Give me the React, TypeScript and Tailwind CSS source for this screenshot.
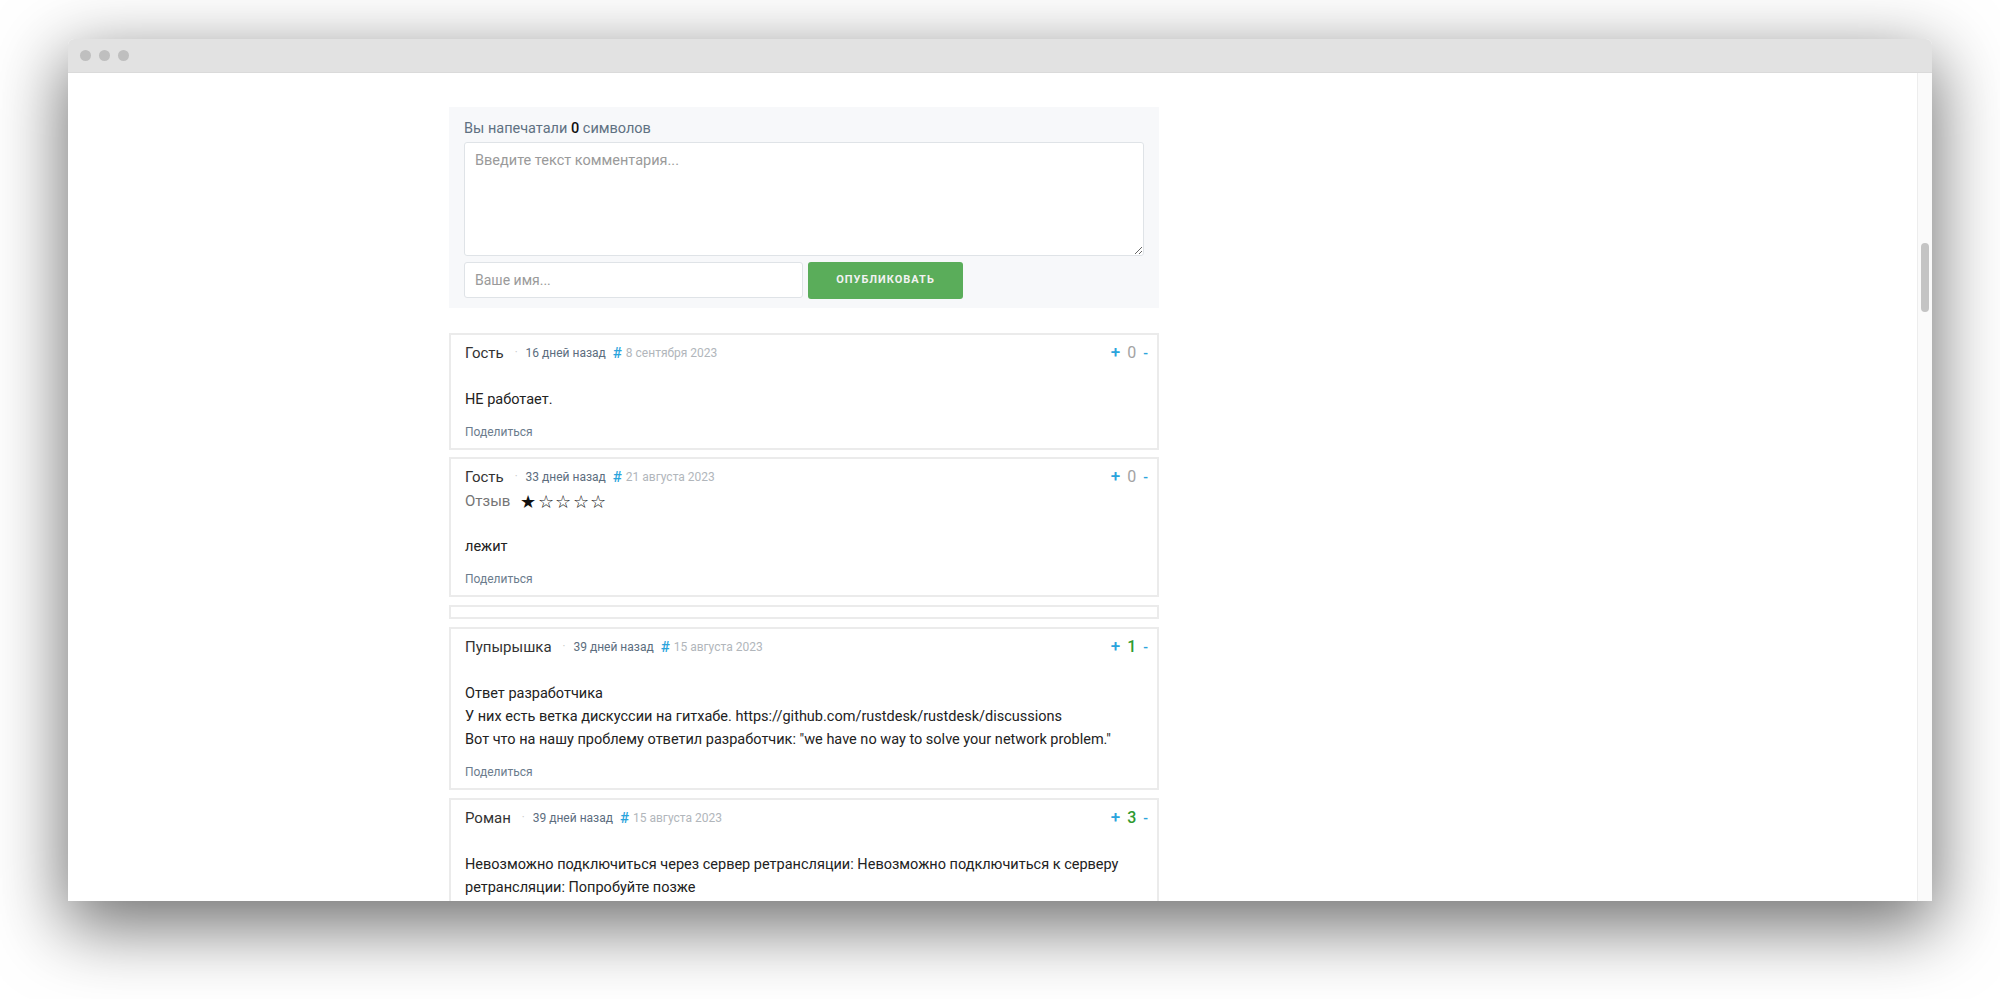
import React from 'react';

interface CommentData {
    author: string;
    ago: string;
    date: string;
    votes: number;
    rating?: number;
    lines: string[];
}

const comments: CommentData[] = [
    {
        author: 'Гость',
        ago: '16 дней назад',
        date: '8 сентября 2023',
        votes: 0,
        lines: ['НЕ работает.'],
    },
    {
        author: 'Гость',
        ago: '33 дней назад',
        date: '21 августа 2023',
        votes: 0,
        rating: 1,
        lines: ['лежит'],
    },
];

const moreComments: CommentData[] = [
    {
        author: 'Пупырышка',
        ago: '39 дней назад',
        date: '15 августа 2023',
        votes: 1,
        lines: [
            'Ответ разработчика',
            'У них есть ветка дискуссии на гитхабе. https://github.com/rustdesk/rustdesk/discussions',
            'Вот что на нашу проблему ответил разработчик: "we have no way to solve your network problem."',
        ],
    },
    {
        author: 'Роман',
        ago: '39 дней назад',
        date: '15 августа 2023',
        votes: 3,
        lines: [
            'Невозможно подключиться через сервер ретрансляции: Невозможно подключиться к серверу ретрансляции: Попробуйте позже',
        ],
    },
];

const Comment: React.FC<{ c: CommentData }> = ({ c }) => (
    <div className="border-2 border-[#ebebeb] bg-white pl-[14px] pr-[9px] pt-[8px] pb-[8px]">
        <div className="flex h-[20px] items-center">
            <span className="text-[15px] text-[#333]">{c.author}</span>
            <span className="ml-[11px] text-[11px] text-[#c4c4c4]">·</span>
            <span className="ml-[8px] text-[12px] text-[#5c6d7e]">{c.ago}</span>
            <span className="ml-[7px] text-[15px] font-medium text-[#2ba4dc]">#</span>
            <span className="ml-[4px] text-[12px] text-[#b1b6bb]">{c.date}</span>
            <div className="ml-auto flex items-center gap-[7px]">
                <span className="text-[17px] font-medium text-[#2ba4dc]">+</span>
                <span className={c.votes > 0 ? 'text-[16px] font-medium text-[#2f9a2f]' : 'text-[16px] text-[#a3a3a3]'}>
                    {c.votes}
                </span>
                <span className="text-[14px] font-medium text-[#2ba4dc]">-</span>
            </div>
        </div>
        {c.rating !== undefined && (
            <div className="mt-[2px] flex h-[24px] items-center">
                <span className="text-[15px] text-[#757575]">Отзыв</span>
                <span className="ml-[10px] text-[18px] tracking-[1.5px] text-[#111]">
                    {[1, 2, 3, 4, 5].map((i) => (i <= (c.rating ?? 0) ? '★' : '☆')).join('')}
                </span>
            </div>
        )}
        <div className={`${c.rating !== undefined ? 'mt-[22px]' : 'mt-[25px]'} text-[14.5px] leading-[23px] text-[#222]`}>
            {c.lines.map((l, i) => (
                <p key={i}>{l}</p>
            ))}
        </div>
        <div className="mt-[13px] h-[16px] text-[12px] leading-[16px] text-[#6b7c8d]">Поделиться</div>
    </div>
);

export default function App() {
    return (
        <div className="h-[999px] w-[2000px] overflow-hidden bg-white pl-[68px] pt-[39px] font-['Roboto',sans-serif]">
            <div className="flex h-[862px] w-[1864px] flex-col overflow-hidden rounded-t-[6px] shadow-[0_22px_70px_4px_rgba(0,0,0,0.56)]">
                {/* title bar */}
                <div className="flex h-[34px] shrink-0 items-center gap-[8px] border-b border-[#dadada] bg-[#e2e2e2] pl-[12px]">
                    <span className="h-[11px] w-[11px] rounded-full bg-[#bfbfbf]" />
                    <span className="h-[11px] w-[11px] rounded-full bg-[#bfbfbf]" />
                    <span className="h-[11px] w-[11px] rounded-full bg-[#bfbfbf]" />
                </div>

                <div className="flex min-h-0 flex-1 overflow-hidden bg-white">
                    <div className="min-h-0 flex-1 overflow-hidden pl-[381px] pt-[34px]">
                        <div className="w-[710px]">
                            {/* form */}
                            <div className="bg-[#f7f8fa] px-[15px] pt-[12px] pb-[9px]">
                                <div className="h-[20px] text-[14.5px] leading-[20px] text-[#607182]">
                                    Вы напечатали <span className="font-medium text-[#111]">0</span> символов
                                </div>
                                <textarea
                                    placeholder="Введите текст комментария..."
                                    className="mt-[3px] block h-[114px] w-full rounded-[3px] border border-[#dfe3e7] bg-white px-[10px] pt-[8px] text-[14.5px] leading-[20px] text-[#333] placeholder:text-[#9a9a9a] focus:outline-none"
                                />
                                <div className="mt-[6px] flex h-[37px] items-start">
                                    <input
                                        placeholder="Ваше имя..."
                                        className="h-[36px] w-[339px] rounded-[3px] border border-[#dfe3e7] bg-white px-[10px] text-[14px] text-[#333] placeholder:text-[#9a9a9a] focus:outline-none"
                                    />
                                    <button className="ml-[5px] h-[37px] w-[155px] rounded-[3px] bg-[#5aad5a] text-[11px] font-bold tracking-[1px] text-[#f2f2f2]">
                                        ОПУБЛИКОВАТЬ
                                    </button>
                                </div>
                            </div>

                            {/* comments */}
                            <div className="mt-[25px] flex flex-col">
                                <Comment c={comments[0]} />
                                <div className="mt-[7px]">
                                    <Comment c={comments[1]} />
                                </div>
                                <div className="mt-[8px] h-[14px] border-2 border-[#ebebeb] bg-white" />
                                <div className="mt-[8px]">
                                    <Comment c={moreComments[0]} />
                                </div>
                                <div className="mt-[8px]">
                                    <Comment c={moreComments[1]} />
                                </div>
                            </div>
                        </div>
                    </div>

                    {/* scrollbar */}
                    <div className="w-[15px] shrink-0 border-l border-[#ededed] bg-[#fafafa] pt-[170px]">
                        <div className="ml-[3px] h-[69px] w-[8px] rounded-full bg-[#c4c4c4]" />
                    </div>
                </div>
            </div>
        </div>
    );
}
